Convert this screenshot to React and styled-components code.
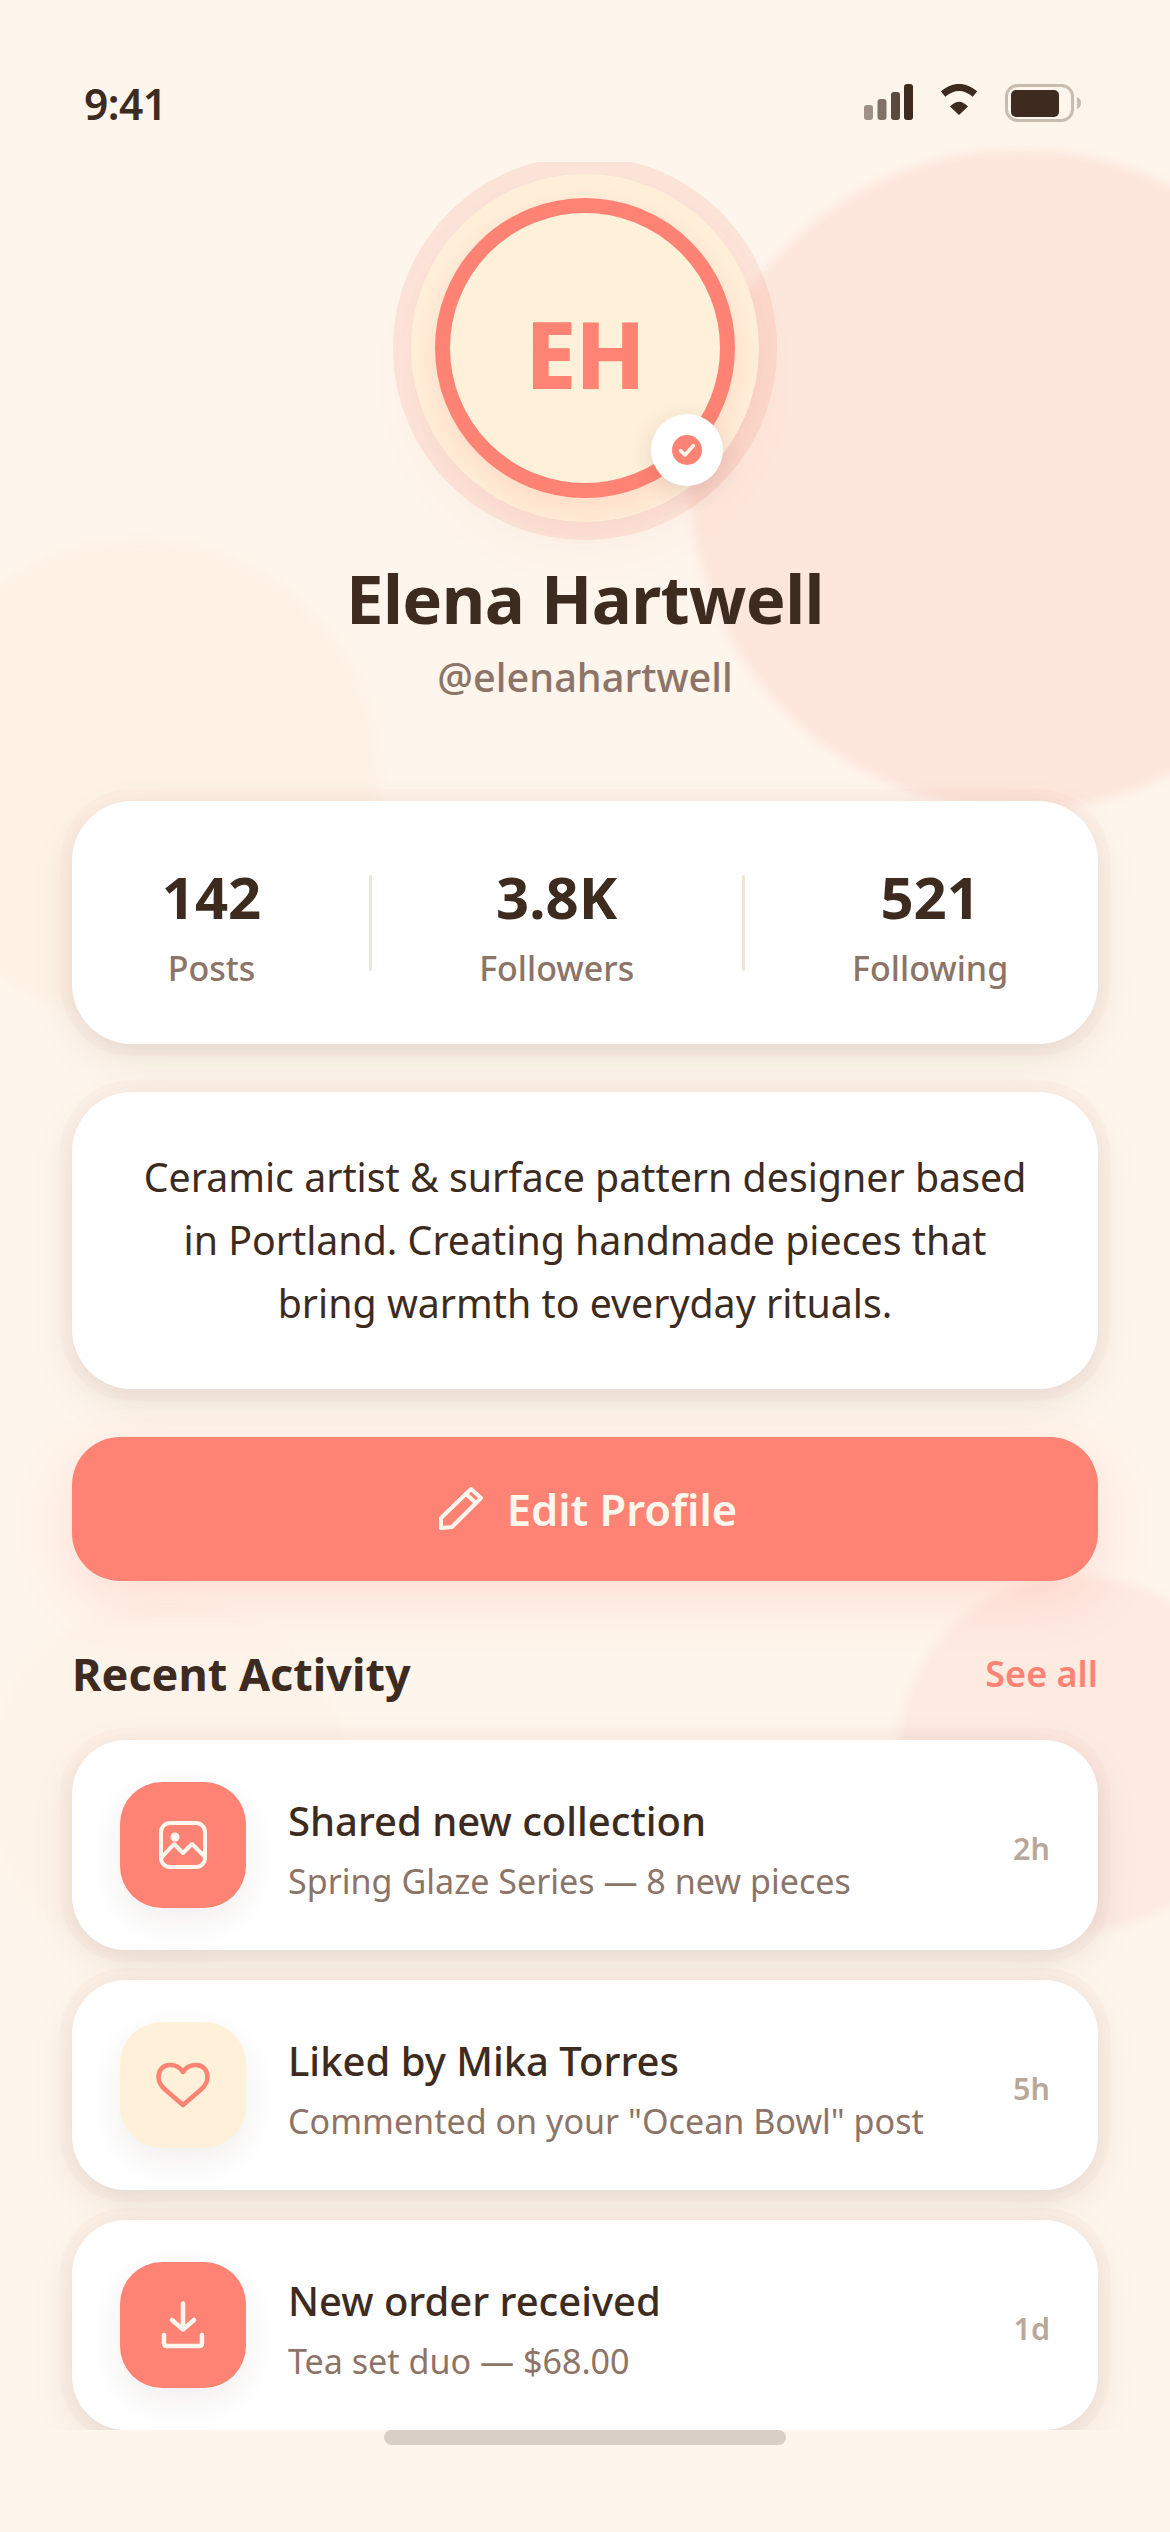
import React from "react";
import styled, { createGlobalStyle } from "styled-components";

const coral = "#FF8374";
const cream = "#FFF0DA";
const ink = "#3D2B1F";
const muted = "#8C7468";

const GlobalStyle = createGlobalStyle`
  * { box-sizing: border-box; }
  html, body { margin: 0; padding: 0; }
  body { font-family: "Noto Sans", "Open Sans", sans-serif; color: ${ink}; }
`;

const Screen = styled.div`
  position: relative;
  width: 1170px;
  height: 2532px;
  overflow: hidden;
  background: #fef5ec;
`;

const Blob = styled.div`
  position: absolute;
  left: ${(p) => p.$x}px;
  top: ${(p) => p.$y}px;
  width: ${(p) => p.$size}px;
  height: ${(p) => p.$size}px;
  border-radius: 50%;
  background: ${(p) => p.$color};
  filter: blur(5px);
`;

const Phone = styled.div`
  position: relative;
  height: 100%;
  display: flex;
  flex-direction: column;
`;

const StatusBar = styled.div`
  height: 162px;
  flex: none;
  padding: 76px 89px 0 84px;
  display: flex;
  justify-content: space-between;
  align-items: flex-start;
`;

const Clock = styled.span`
  font-size: 42.500px;
  line-height: 56px;
  font-weight: 600;
  letter-spacing: -0.5px;
`;

const StatusIcons = styled.div`
  display: flex;
  align-items: flex-start;
  gap: 27px;
  padding-top: 8px;
`;

const Scroller = styled.div`
  height: 2268px;
  flex: none;
  overflow: hidden;
  padding: 0 72px;
`;

const Hero = styled.div`
  display: flex;
  flex-direction: column;
  align-items: center;
  padding-top: 36px;
`;

const Avatar = styled.div`
  position: relative;
  width: 300px;
  height: 300px;
  border-radius: 50%;
  border: 15px solid ${coral};
  background: ${cream};
  color: ${coral};
  font-size: 92px;
  font-weight: 800;
  letter-spacing: -1px;
  padding-top: 10px;
  display: flex;
  align-items: center;
  justify-content: center;
  box-shadow: 0 12px 36px rgba(255, 131, 116, 0.2), 0 0 0 24px ${cream}, 0 0 0 42px rgba(240, 130, 110, 0.15),
    0 30px 72px rgba(190, 90, 70, 0.08);
`;

const Badge = styled.div`
  position: absolute;
  right: -3px;
  bottom: -3px;
  width: 72px;
  height: 72px;
  border-radius: 50%;
  background: #fff;
  display: flex;
  align-items: center;
  justify-content: center;
  box-shadow: 0 6px 24px rgba(61, 43, 31, 0.12);
`;

const Name = styled.h1`
  margin: 60px 0 0;
  font-size: 67px;
  line-height: 80px;
  font-weight: 700;
  letter-spacing: -0.6px;
`;

const Handle = styled.div`
  margin-top: 13px;
  font-size: 39.700px;
  line-height: 52px;
  font-weight: 500;
  color: ${muted};
`;

const Card = styled.div`
  background: #fff;
  border-radius: 60px;
  box-shadow: 0 0 0 12px rgba(220, 150, 110, 0.035), 0 8px 20px rgba(61, 43, 31, 0.05), 0 14px 48px rgba(61, 43, 31, 0.07);
`;

const Stats = styled(Card)`
  margin-top: 98px;
  height: 243px;
  padding: 0 36px;
  display: flex;
  align-items: center;
  justify-content: space-around;
`;

const Stat = styled.div`
  flex: none;
  text-align: center;
  padding-top: 10px;
`;

const StatValue = styled.div`
  font-size: 58px;
  line-height: 68px;
  font-weight: 700;
`;

const StatLabel = styled.div`
  margin-top: 13px;
  font-size: 34px;
  line-height: 48px;
  font-weight: 500;
  color: ${muted};
`;

const Divider = styled.div`
  flex: none;
  width: 3px;
  height: 96px;
  background: #f0e4d8;
  border-radius: 2px;
`;

const Bio = styled(Card)`
  margin-top: 48px;
  padding: 54px 60px;
  font-size: 39.300px;
  line-height: 63px;
  text-align: center;
`;

const EditButton = styled.button`
  margin-top: 48px;
  width: 100%;
  height: 144px;
  border: 0;
  padding: 0 0 0 6px;
  border-radius: 48px;
  background: ${coral};
  color: #fff7ee;
  font: 600 43.500px "Noto Sans", "Open Sans", sans-serif;
  display: flex;
  align-items: center;
  justify-content: center;
  gap: 24px;
  box-shadow: 0 18px 54px rgba(255, 131, 116, 0.2);
`;

const SectionHead = styled.div`
  margin-top: 60px;
  height: 64px;
  margin-bottom: 35px;
  display: flex;
  align-items: center;
  justify-content: space-between;
`;

const SectionTitle = styled.h2`
  margin: 0;
  font-size: 45px;
  font-weight: 700;
`;

const SeeAll = styled.span`
  font-size: 36px;
  font-weight: 600;
  color: ${coral};
`;

const List = styled.div`
  display: flex;
  flex-direction: column;
  gap: 30px;
`;

const Row = styled(Card)`
  height: 210px;
  border-radius: 54px;
  padding: 0 48px;
  display: flex;
  align-items: center;
  gap: 42px;
`;

const Tile = styled.div`
  width: 126px;
  height: 126px;
  flex: none;
  border-radius: 42px;
  background: ${(p) => (p.$soft ? cream : coral)};
  display: flex;
  align-items: center;
  justify-content: center;
  box-shadow: 0 12px 36px rgba(61, 43, 31, 0.08);
`;

const RowText = styled.div`
  flex: 1;
  padding-top: 8px;
`;

const RowTitle = styled.div`
  font-size: 40px;
  line-height: 56px;
  font-weight: 500;
`;

const RowSub = styled.div`
  margin-top: 8px;
  font-size: 34.100px;
  line-height: 48px;
  color: ${muted};
`;

const RowTime = styled.div`
  padding-top: 6px;
  font-size: 30.500px;
  font-weight: 600;
  color: #b8a89c;
`;

const HomeBar = styled.div`
  position: absolute;
  left: 384px;
  top: 2430px;
  width: 402px;
  height: 15px;
  border-radius: 8px;
  background: #d9cfc6;
`;

const Signal = () => (
  <svg width="49" height="36" viewBox="0 0 49 36">
    <rect x="0" y="21" width="9" height="15" rx="3" fill={ink} opacity="0.5" />
    <rect x="13.500" y="15" width="9" height="21" rx="3" fill={ink} opacity="0.65" />
    <rect x="27" y="8" width="9" height="28" rx="3" fill={ink} opacity="0.85" />
    <rect x="40" y="0" width="9" height="36" rx="3" fill={ink} />
  </svg>
);

const Wifi = () => (
  <svg width="38" height="32" viewBox="0 0 38 32">
    <path d="M3 10 Q19 -3 35 10" fill="none" stroke={ink} strokeWidth="7" />
    <path d="M10 22.500 Q19 13 28 22.500 L19 31 Z" fill={ink} />
  </svg>
);

const Battery = () => (
  <svg width="76" height="38" viewBox="0 0 76 38">
    <rect x="1.500" y="1.500" width="66" height="35" rx="11" fill="none" stroke="#c8bcb1" strokeWidth="3" />
    <rect x="6" y="6" width="48" height="27" rx="5" fill={ink} />
    <path d="M72 13 C75 14 76 16 76 19 C76 22 75 24 72 25 Z" fill="#c8bcb1" />
  </svg>
);

const CheckDot = () => (
  <svg width="30" height="30" viewBox="0 0 30 30">
    <circle cx="15" cy="15" r="15" fill={coral} />
    <path d="M8.500 15.500 L13 20 L21.500 10.500" fill="none" stroke="#fff7ee" strokeWidth="3.500" strokeLinecap="round" strokeLinejoin="round" />
  </svg>
);

const Pencil = () => (
  <svg width="44" height="44" viewBox="0 0 44 44" fill="none" stroke="#fff7ee" strokeWidth="4" strokeLinecap="round" strokeLinejoin="round">
    <path d="M32 2 L42 11 L13 40 L2 41 L2 31 Z" />
    <path d="M27 7 L37 16" />
  </svg>
);

const ImageIcon = () => (
  <svg width="48" height="48" viewBox="0 0 48 48" fill="none" stroke="#fff7ee" strokeWidth="4" strokeLinecap="round" strokeLinejoin="round">
    <rect x="2" y="2" width="44" height="44" rx="9" />
    <circle cx="16" cy="16" r="4.500" fill="#fff7ee" stroke="none" />
    <path d="M3 36 L15 23 L24 32 L33 23 L45 35" />
  </svg>
);

const HeartIcon = () => (
  <svg width="54" height="46" viewBox="0 0 54 46" fill="none" stroke={coral} strokeWidth="4.500" strokeLinecap="round" strokeLinejoin="round">
    <path d="M27 10 C24 5 19 3 14 3 C7 3 2.500 8 2.500 15 C2.500 20 5 24 9 27.500 L27 43 L45 27.500 C49 24 51.500 20 51.500 15 C51.500 8 47 3 40 3 C35 3 30 5 27 10 Z" />
  </svg>
);

const DownloadIcon = () => (
  <svg width="44" height="48" viewBox="0 0 44 48" fill="none" stroke="#fff7ee" strokeWidth="4.500" strokeLinecap="round" strokeLinejoin="round">
    <path d="M22 2.500 L22 27" />
    <path d="M11 19 L22 28.500 L33 19" />
    <path d="M3 34 L3 42 Q3 45 6 45 L38 45 Q41 45 41 42 L41 34" />
  </svg>
);

const activity = [
  { title: "Shared new collection", sub: "Spring Glaze Series — 8 new pieces", time: "2h", icon: <ImageIcon /> },
  { title: "Liked by Mika Torres", sub: 'Commented on your "Ocean Bowl" post', time: "5h", icon: <HeartIcon />, soft: true },
  { title: "New order received", sub: "Tea set duo — $68.00", time: "1d", icon: <DownloadIcon /> },
];

const stats = [
  { value: "142", label: "Posts" },
  { value: "3.8K", label: "Followers" },
  { value: "521", label: "Following" },
];

export default function App() {
  return (
    <Screen>
      <GlobalStyle />
      <Blob $x={690} $y={150} $size={660} $color="rgba(244,120,100,0.12)" />
      <Blob $x={-100} $y={540} $size={480} $color="rgba(255,226,190,0.14)" />
      <Blob $x={898} $y={1576} $size={356} $color="rgba(244,120,100,0.08)" />
      <Blob $x={-12} $y={1600} $size={360} $color="rgba(255,226,190,0.07)" />
      <Phone>
        <StatusBar>
          <Clock>9:41</Clock>
          <StatusIcons>
            <Signal />
            <Wifi />
            <Battery />
          </StatusIcons>
        </StatusBar>
        <Scroller>
          <Hero>
            <Avatar>
              EH
              <Badge>
                <CheckDot />
              </Badge>
            </Avatar>
            <Name>Elena Hartwell</Name>
            <Handle>@elenahartwell</Handle>
          </Hero>
          <Stats>
            {stats.map((s, i) => (
              <React.Fragment key={s.label}>
                {i > 0 && <Divider />}
                <Stat>
                  <StatValue>{s.value}</StatValue>
                  <StatLabel>{s.label}</StatLabel>
                </Stat>
              </React.Fragment>
            ))}
          </Stats>
          <Bio>
            Ceramic artist &amp; surface pattern designer based in Portland. Creating handmade pieces that bring warmth to everyday rituals.
          </Bio>
          <EditButton>
            <Pencil />
            Edit Profile
          </EditButton>
          <SectionHead>
            <SectionTitle>Recent Activity</SectionTitle>
            <SeeAll>See all</SeeAll>
          </SectionHead>
          <List>
            {activity.map((a) => (
              <Row key={a.title}>
                <Tile $soft={a.soft}>{a.icon}</Tile>
                <RowText>
                  <RowTitle>{a.title}</RowTitle>
                  <RowSub>{a.sub}</RowSub>
                </RowText>
                <RowTime>{a.time}</RowTime>
              </Row>
            ))}
          </List>
        </Scroller>
        <HomeBar />
      </Phone>
    </Screen>
  );
}
